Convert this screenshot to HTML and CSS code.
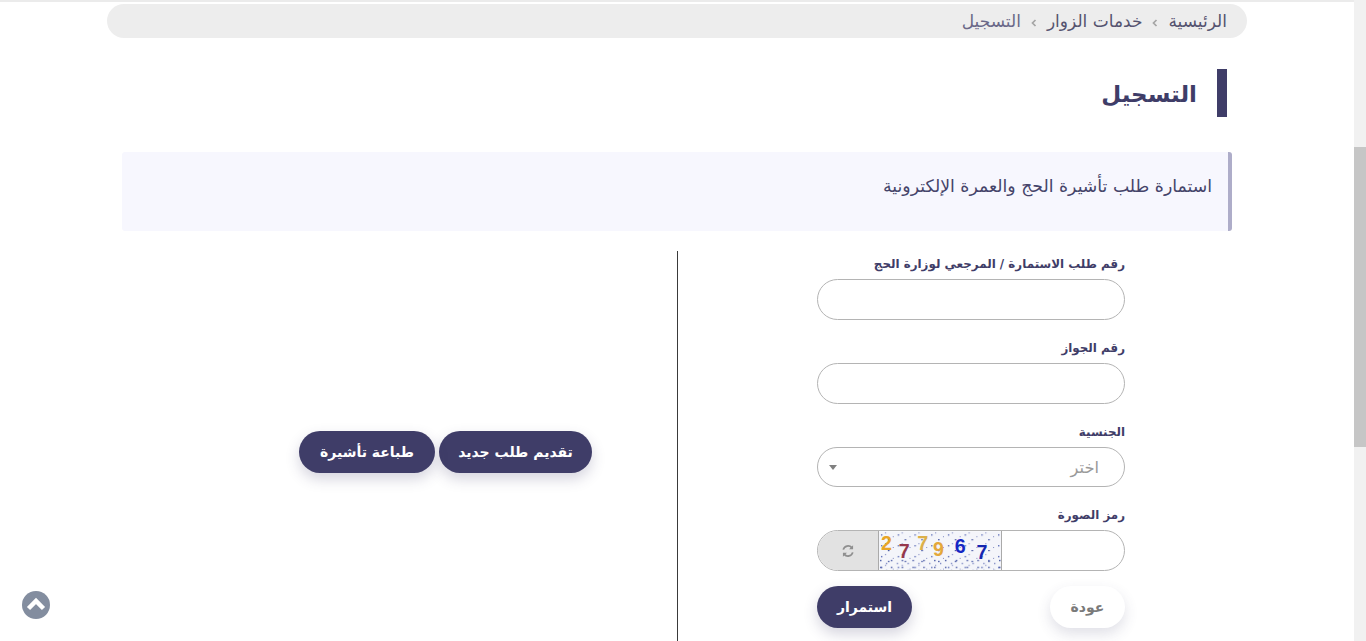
FILE: index.html
```html
<!DOCTYPE html>
<html lang="ar" dir="rtl">
<head>
<meta charset="utf-8">
<title>التسجيل</title>
<link rel="stylesheet" href="styles.css">
</head>
<body>
<div class="scrollbar"><div class="thumb"></div></div>
<main class="page">
  <div class="container">
    <nav class="breadcrumb">
      <a>الرئيسية</a><svg class="chev" viewBox="0 0 6 8"><path d="M4.500 1 1.500 4l3 3" fill="none" stroke="#a5a5a5" stroke-width="1.700"/></svg>
      <a>خدمات الزوار</a><svg class="chev" viewBox="0 0 6 8"><path d="M4.500 1 1.500 4l3 3" fill="none" stroke="#a5a5a5" stroke-width="1.700"/></svg>
      <span class="current">التسجيل</span>
    </nav>
    <div class="content">
      <h1 class="title">التسجيل</h1>
      <div class="notice">استمارة طلب تأشيرة الحج والعمرة الإلكترونية</div>
      <div class="columns">
        <form class="form">
          <label class="label">رقم طلب الاستمارة / المرجعي لوزارة الحج</label>
          <div class="field"></div>
          <label class="label">رقم الجواز</label>
          <div class="field"></div>
          <label class="label">الجنسية</label>
          <div class="field select"><span class="placeholder">اختر</span><span class="caret"></span></div>
          <label class="label">رمز الصورة</label>
          <div class="field captcha">
            <span class="cap-input"></span>
            <svg class="cap-img" viewBox="0 0 124 39">
              <defs>
                <pattern id="noise" width="17" height="11" patternUnits="userSpaceOnUse">
                  <rect x="2" y="3" width="1.400" height="1.400" fill="#5a6bb5"/>
                  <rect x="9" y="8" width="1.600" height="1.200" fill="#3d4f9f"/>
                  <rect x="6" y="1" width="1.200" height="1.200" fill="#8d96c8"/>
                  <rect x="14" y="5" width="1" height="1" fill="#7a85c0"/>
                </pattern>
                <pattern id="noise2" width="11" height="7" patternUnits="userSpaceOnUse">
                  <rect x="1" y="1" width="1.500" height="1.300" fill="#3d4f9f"/>
                  <rect x="7" y="4" width="1.300" height="1.300" fill="#6c78bb"/>
                </pattern>
              </defs>
              <rect width="124" height="39" fill="#f4f5fa"/>
              <rect width="124" height="39" fill="url(#noise)"/>
              <rect y="27" width="124" height="12" fill="url(#noise2)"/>
              <text class="d" x="2" y="19" fill="#e8a526">2</text>
              <text class="d" x="20" y="27" fill="#96384c">7</text>
              <text class="d" x="39" y="18.500" fill="#dcb04a">7</text>
              <text class="d" x="55" y="25" fill="#e4a83a">9</text>
              <text class="d" x="77" y="22" fill="#1426c4">6</text>
              <text class="d" x="99" y="28" fill="#1426b0">7</text>
            </svg>
            <span class="cap-refresh">
              <svg viewBox="0 0 16 16" class="refresh"><path d="M2.600 6.400A5.600 5.600 0 0 1 12.300 4.200M13.400 9.600A5.600 5.600 0 0 1 3.700 11.800" fill="none" stroke="#8f8f8f" stroke-width="2"/><path d="M13.800 1.500v4.600H9.200zM2.200 14.500V9.900h4.600z" fill="#8f8f8f"/></svg>
            </span>
          </div>
          <div class="actions">
            <button type="button" class="btn light">عودة</button>
            <button type="button" class="btn dark">استمرار</button>
          </div>
        </form>
        <aside class="side">
          <button type="button" class="btn dark new">تقديم طلب جديد</button>
          <button type="button" class="btn dark print">طباعة تأشيرة</button>
        </aside>
      </div>
    </div>
  </div>
</main>
<a class="to-top"><svg viewBox="0 0 28 28"><path d="M6.500 17.500 14 10l7.500 7.500" fill="none" stroke="#fff" stroke-width="4.500"/></svg></a>
</body>
</html>
```
FILE: styles.css
```css
* { box-sizing: border-box; }
html, body { margin: 0; height: 641px; overflow: hidden; }
body {
  display: flex;
  flex-direction: row;
  background: #fff;
  font-family: "DejaVu Sans", "Noto Sans", sans-serif;
  color: #3f3d68;
}
.scrollbar { width: 12px; height: 641px; background: #f1f1f1; flex: none; }
.thumb { margin-top: 147px; height: 300px; background: #c6c6c6; }
.page { flex: 1; min-width: 0; border-top: 2px solid #ebebeb; height: 641px; overflow: hidden; }
.container { width: 1140px; margin: 0 auto; }
.breadcrumb {
  margin-top: 2px;
  height: 34px;
  border-radius: 17px;
  background: #ededed;
  padding: 0 20px;
  display: flex;
  align-items: center;
  gap: 10px;
  font-size: 17px;
  color: #55536f;
}
.chev { width: 6px; height: 8px; margin-top: 3px; }
.current { color: #6a6888; }
.content { padding: 0 15px; }
.title {
  margin: 31px 5px 0 0;
  height: 48px;
  border-right: 10px solid #3f3d68;
  padding-right: 20px;
  font-size: 23px;
  line-height: 50px;
  font-weight: 700;
  color: #3f3d68;
}
.notice {
  margin-top: 35px;
  height: 79px;
  background: #f7f7fe;
  border-right: 4px solid #aeadc9;
  border-radius: 3px;
  padding: 0 16px;
  line-height: 68px;
  font-size: 17.300px;
  color: #45446a;
}
.columns { margin-top: 20px; display: grid; grid-template-columns: 555px 555px; height: 402px; }
.form { padding: 0 107px 0 139px; border-left: 1px solid #3a3a3a; }
.label { display: block; height: 20px; line-height: 26px; font-size: 11.900px; font-weight: 700; color: #3f3d68; margin-bottom: 8px; }
.field {
  height: 41px;
  border: 1px solid #b4b4b4;
  border-radius: 21px;
  margin-bottom: 15px;
  background: #fff;
}
.select { height: 40px; display: flex; align-items: center; justify-content: space-between; padding: 0 25px 0 11px; }
.placeholder { font-size: 16.300px; color: #9a9a9a; }
.caret { width: 0; height: 0; border-left: 4px solid transparent; border-right: 4px solid transparent; border-top: 5px solid #808080; }
.captcha { display: flex; overflow: hidden; }
.cap-input { flex: 1; }
.cap-img { width: 124px; height: 39px; flex: none; display: block; direction: ltr; border-left: 1px solid #aaa; border-right: 1px solid #aaa; }
.d { font-family: "Liberation Sans", sans-serif; font-weight: 700; font-size: 20px; }
.cap-refresh { width: 60px; flex: none; background: #e2e2e2; display: flex; align-items: center; justify-content: center; }
.refresh { width: 14px; height: 14px; }
.actions { display: flex; justify-content: space-between; }
.btn {
  height: 42px;
  border: 0;
  border-radius: 21px;
  padding: 0;
  font-family: inherit;
  font-size: 14px;
  font-weight: 700;
}
.dark { background: #3f3d68; color: #fff; width: 95px; box-shadow: 0 6px 14px rgba(63, 61, 104, 0.22); }
.light { background: #fff; color: #7a7a7a; width: 75px; box-shadow: 0 6px 14px rgba(63, 61, 104, 0.16); }
.side { display: flex; align-items: center; justify-content: flex-start; gap: 4px; padding-right: 85px; }
.new { width: 153px; }
.print { width: 136px; }
.to-top {
  position: fixed;
  left: 22px;
  top: 591px;
  width: 28px;
  height: 28px;
  border-radius: 50%;
  background: #838d9f;
}
.to-top svg { display: block; }
```
